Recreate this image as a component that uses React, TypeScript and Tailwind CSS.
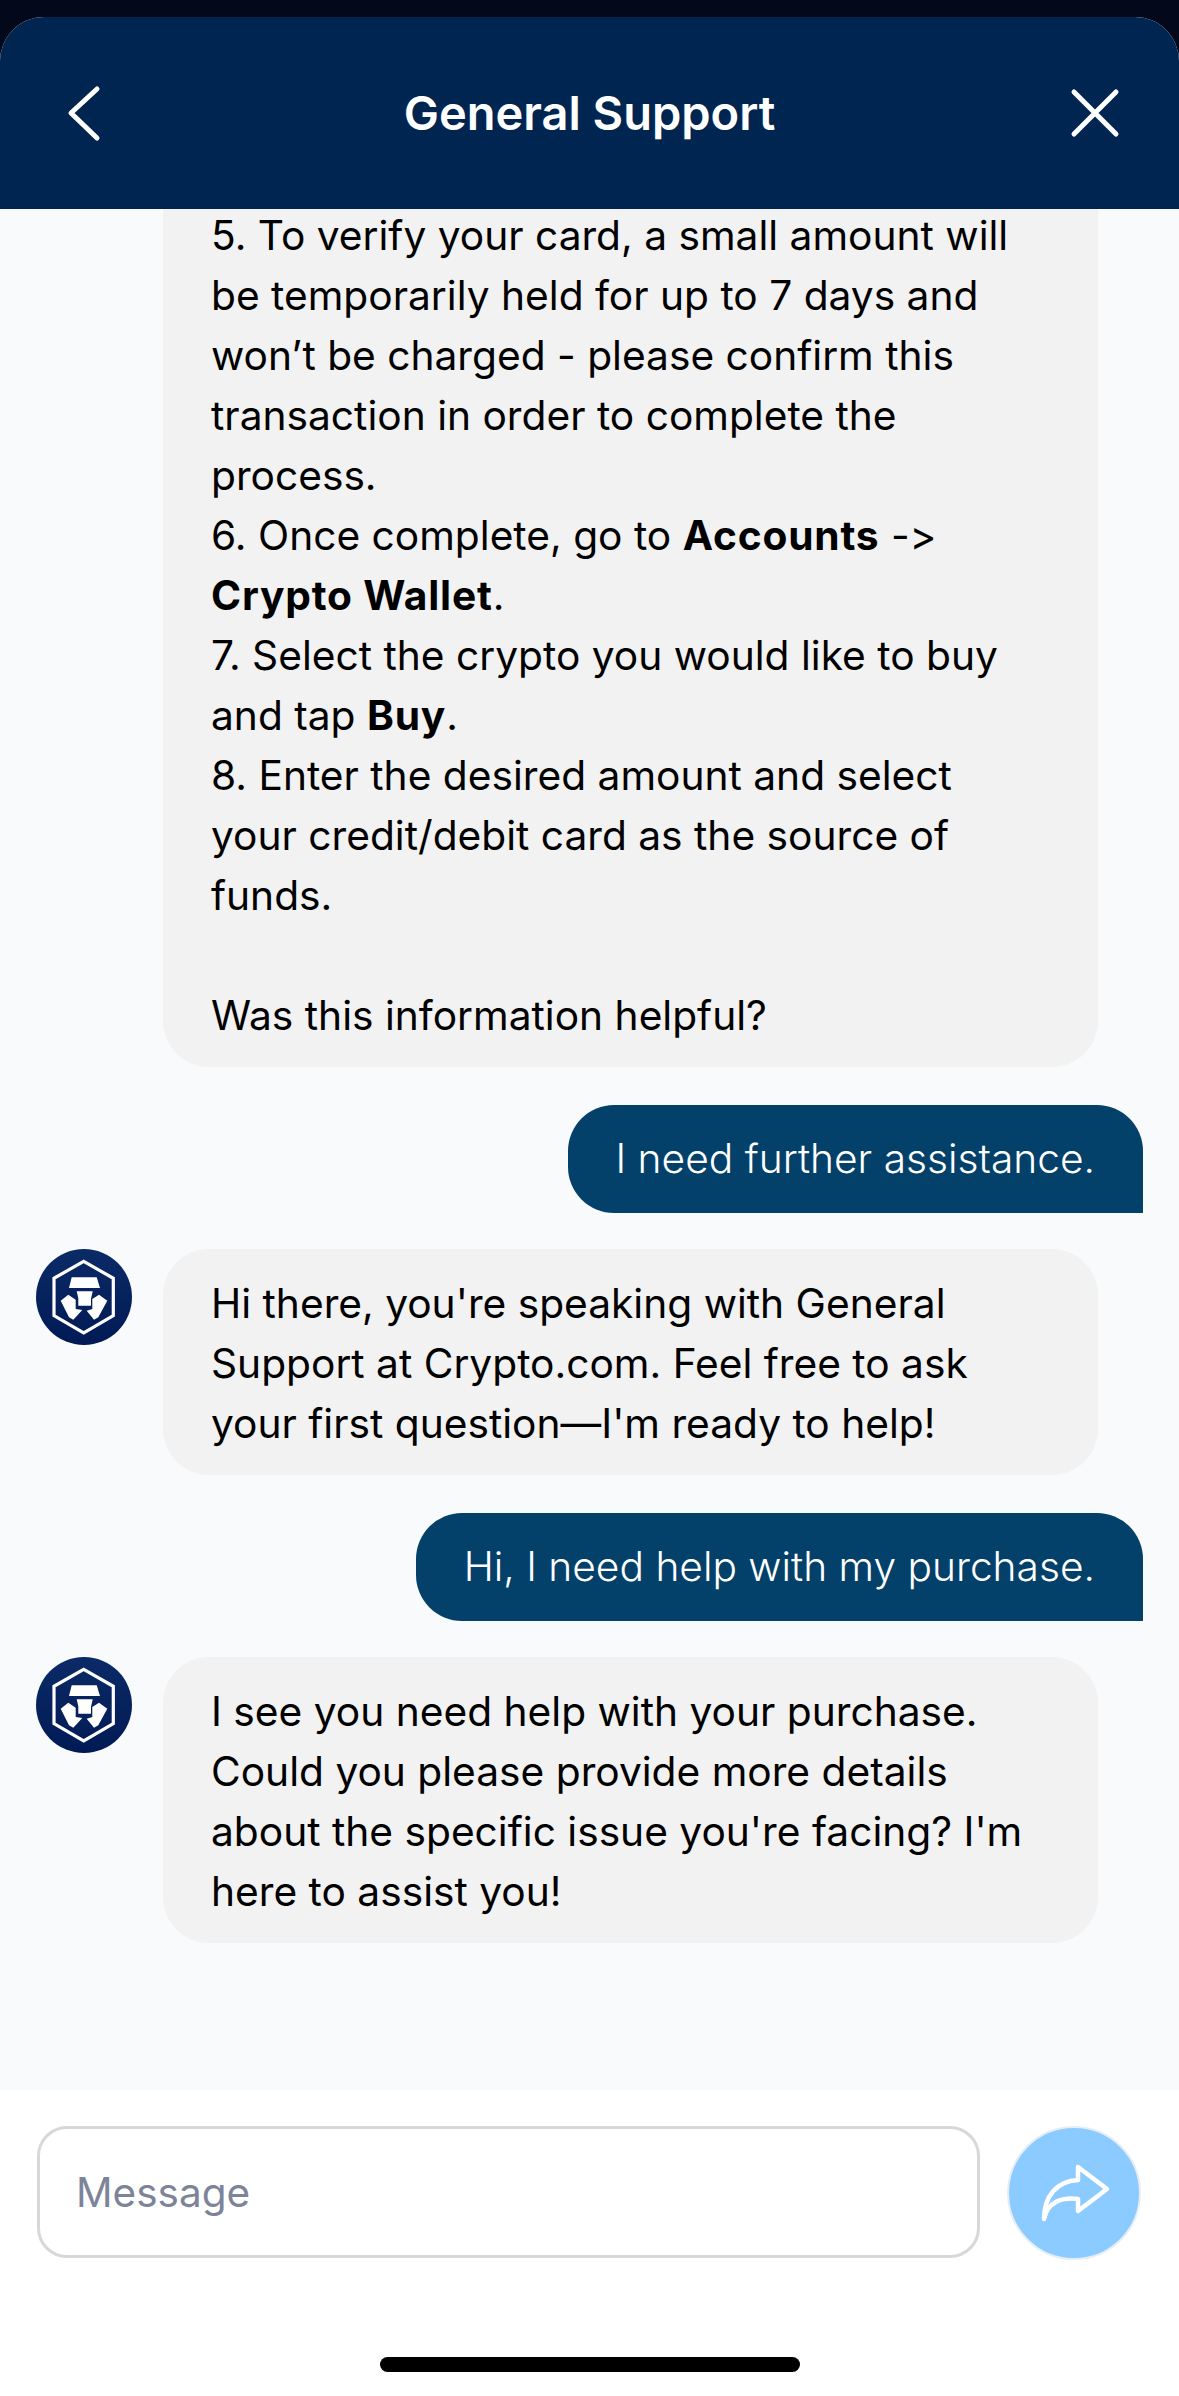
function BotAvatar() {
  return (
    <svg viewBox="0 0 96 96" className="w-[96px] h-[96px] shrink-0">
      <defs>
        <linearGradient id="cro" x1="0" y1="0" x2="0" y2="1">
          <stop offset="0" stopColor="#0b2b66" />
          <stop offset="1" stopColor="#011a55" />
        </linearGradient>
      </defs>
      <circle cx="48" cy="48" r="48" fill="url(#cro)" />
      <path d="M47.7 12.3 77.3 29.3V66.7L47.7 84 18 66.7V29.3Z" fill="none" stroke="#fff" strokeWidth="3.2" />
      <path d="M35.7 28.3H60.7L64 39H33Z" fill="#fff" />
      <path d="M40.7 42.3H56.7L55 50V56.7H42.3V49.3Z" fill="#fff" />
      <path d="M32.3 45.7 39.7 50.7V60L46.3 61 37.3 70.7 33 68.3 24.7 51.7Z" fill="#fff" />
      <path d="M63 45.7 71.3 51.7 62.3 68.3 58 70.7 50.7 61.7 56.3 60V50Z" fill="#fff" />
    </svg>
  );
}

function BotBubble({ children, className = "" }: { children: React.ReactNode; className?: string }) {
  return <div className={`w-[935px] shrink-0 bg-[#f2f2f2] rounded-[46px] pl-[48px] pr-[66px] pt-[25px] pb-[21px] text-black ${className}`}>{children}</div>;
}

function UserBubble({ text }: { text: string }) {
  return (
    <div className="self-end shrink-0 mt-[38px] mb-[36px] h-[108px] flex items-center px-[48px] bg-[#03416a] text-white font-light rounded-t-[46px] rounded-bl-[46px]">
      {text}
    </div>
  );
}

export default function App() {
  return (
    <div className="h-screen w-full bg-[#03081a] pt-[17px] flex flex-col overflow-hidden font-['Inter',sans-serif]">
      <div className="flex-1 min-h-0 flex flex-col rounded-t-[44px] overflow-hidden bg-[#f8fafc]">
        <header className="h-[192px] shrink-0 bg-[#002551] text-white flex items-center justify-between px-[54px]">
          <div className="w-[60px] pl-[10px]">
            <svg viewBox="0 0 40 60" className="w-[40px] h-[60px]" fill="none" stroke="#fff" strokeWidth="5" strokeLinecap="round" strokeLinejoin="round">
              <path d="M33 6 7 30 33 55" />
            </svg>
          </div>
          <h1 className="text-[47px] font-semibold">General Support</h1>
          <svg viewBox="0 0 60 60" className="w-[60px] h-[60px]" fill="none" stroke="#fff" strokeWidth="5" strokeLinecap="round">
            <path d="M9 9 51 51M51 9 9 51" />
          </svg>
        </header>

        <main className="flex-1 min-h-0 flex flex-col justify-end overflow-hidden px-[36px] pb-[147px] text-[40.7px] leading-[60px] [font-feature-settings:'calt'_0]">
          <BotBubble className="ml-[127px] rounded-t-none">
            5. To verify your card, a small amount will be temporarily held for up to 7 days and won’t be charged - please confirm this transaction in order to complete the process.
            <br />
            6. Once complete, go to <strong className="font-bold tracking-[0.8px]">Accounts</strong> -&gt; <strong className="font-bold tracking-[0.8px]">Crypto Wallet</strong>.
            <br />
            7. Select the crypto you would like to buy and tap <strong className="font-bold tracking-[0.8px]">Buy</strong>.
            <br />
            8. Enter the desired amount and select your credit/debit card as the source of funds.
            <br />
            <br />
            Was this information helpful?
          </BotBubble>

          <UserBubble text="I need further assistance." />

          <div className="flex gap-[31px] shrink-0">
            <BotAvatar />
            <BotBubble>Hi there, you're speaking with General Support at Crypto.com. Feel free to ask your first question—I'm ready to help!</BotBubble>
          </div>

          <UserBubble text="Hi, I need help with my purchase." />

          <div className="flex gap-[31px] shrink-0">
            <BotAvatar />
            <BotBubble>I see you need help with your purchase. Could you please provide more details about the specific issue you're facing? I'm here to assist you!</BotBubble>
          </div>
        </main>

        <footer className="h-[306px] shrink-0 bg-white pt-[36px] flex flex-col items-center">
          <div className="w-full flex gap-[27px] pl-[37px] pr-[38px]">
            <input
              placeholder="Message"
              className="flex-1 h-[132px] rounded-[30px] border-[3px] border-[#d8d8d8] bg-white pl-[36px] text-[40.5px] outline-none placeholder:text-[#7d8499]"
            />
            <button className="w-[134px] h-[134px] shrink-0 rounded-full bg-[#8ccbff] border-[2px] border-[#e6eef5] flex items-center justify-center">
              <svg viewBox="0 0 134 134" className="w-[134px] h-[134px] shrink-0" fill="none" stroke="#fff" strokeWidth="4.5" strokeLinejoin="round" strokeLinecap="round">
                <path d="M37 93C37 70 50 55 71 54V41L100 63 71 85V73C55 71 40 76 37 93Z" />
              </svg>
            </button>
          </div>
          <div className="mt-[97px] w-[420px] h-[15px] rounded-full bg-black" />
        </footer>
      </div>
    </div>
  );
}
